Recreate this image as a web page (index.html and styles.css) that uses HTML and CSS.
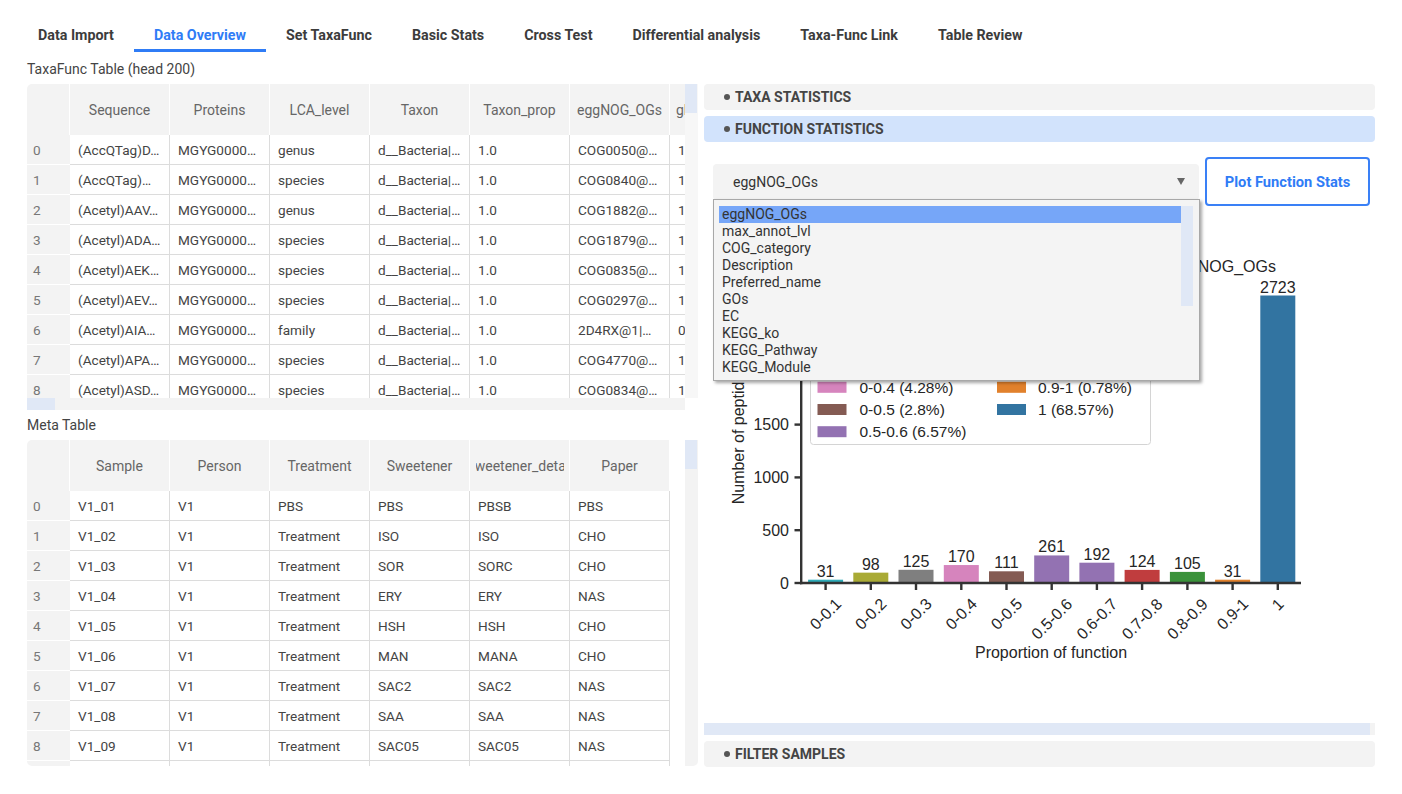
FILE: index.html
```html
<!DOCTYPE html>
<html>
<head>
<meta charset="utf-8">
<link rel="stylesheet" href="styles.css">
</head>
<body>
<div class="tabs">
  <div class="tab">Data Import</div>
  <div class="tab active">Data Overview</div>
  <div class="tab">Set TaxaFunc</div>
  <div class="tab">Basic Stats</div>
  <div class="tab">Cross Test</div>
  <div class="tab">Differential analysis</div>
  <div class="tab">Taxa-Func Link</div>
  <div class="tab">Table Review</div>
</div>
<div class="main">
  <div class="col left">
    <div class="label l1">TaxaFunc Table (head 200)</div>
    <div class="tbox t1">
      <div class="tmain">
        <div class="viewport">
          <div class="grid">
            <div class="h"></div><div class="h"><span>Sequence</span></div><div class="h"><span>Proteins</span></div><div class="h"><span>LCA_level</span></div><div class="h"><span>Taxon</span></div><div class="h"><span>Taxon_prop</span></div><div class="h"><span>eggNOG_OGs</span></div><div class="h hl"><span>glycan_level</span></div>
            <div class="i">0</div><div class="c">(AccQTag)D…</div><div class="c">MGYG0000…</div><div class="c">genus</div><div class="c">d__Bacteria|…</div><div class="c">1.0</div><div class="c">COG0050@…</div><div class="c">1</div>
            <div class="i">1</div><div class="c">(AccQTag)…</div><div class="c">MGYG0000…</div><div class="c">species</div><div class="c">d__Bacteria|…</div><div class="c">1.0</div><div class="c">COG0840@…</div><div class="c">1</div>
            <div class="i">2</div><div class="c">(Acetyl)AAV…</div><div class="c">MGYG0000…</div><div class="c">genus</div><div class="c">d__Bacteria|…</div><div class="c">1.0</div><div class="c">COG1882@…</div><div class="c">1</div>
            <div class="i">3</div><div class="c">(Acetyl)ADA…</div><div class="c">MGYG0000…</div><div class="c">species</div><div class="c">d__Bacteria|…</div><div class="c">1.0</div><div class="c">COG1879@…</div><div class="c">1</div>
            <div class="i">4</div><div class="c">(Acetyl)AEK…</div><div class="c">MGYG0000…</div><div class="c">species</div><div class="c">d__Bacteria|…</div><div class="c">1.0</div><div class="c">COG0835@…</div><div class="c">1</div>
            <div class="i">5</div><div class="c">(Acetyl)AEV…</div><div class="c">MGYG0000…</div><div class="c">species</div><div class="c">d__Bacteria|…</div><div class="c">1.0</div><div class="c">COG0297@…</div><div class="c">1</div>
            <div class="i">6</div><div class="c">(Acetyl)AIA…</div><div class="c">MGYG0000…</div><div class="c">family</div><div class="c">d__Bacteria|…</div><div class="c">1.0</div><div class="c">2D4RX@1|…</div><div class="c">0</div>
            <div class="i">7</div><div class="c">(Acetyl)APA…</div><div class="c">MGYG0000…</div><div class="c">species</div><div class="c">d__Bacteria|…</div><div class="c">1.0</div><div class="c">COG4770@…</div><div class="c">1</div>
            <div class="i">8</div><div class="c">(Acetyl)ASD…</div><div class="c">MGYG0000…</div><div class="c">species</div><div class="c">d__Bacteria|…</div><div class="c">1.0</div><div class="c">COG0834@…</div><div class="c">1</div>
          </div>
        </div>
        <div class="vscroll"><div class="vthumb"></div></div>
      </div>
      <div class="hscroll"><div class="htrack"><div class="hthumb"></div></div></div>
    </div>
    <div class="label l2">Meta Table</div>
    <div class="tbox t2">
      <div class="tmain">
        <div class="viewport">
          <div class="grid">
            <div class="h"></div><div class="h"><span>Sample</span></div><div class="h"><span>Person</span></div><div class="h"><span>Treatment</span></div><div class="h"><span>Sweetener</span></div><div class="h"><span>Sweetener_detail</span></div><div class="h"><span>Paper</span></div>
            <div class="i">0</div><div class="c">V1_01</div><div class="c">V1</div><div class="c">PBS</div><div class="c">PBS</div><div class="c">PBSB</div><div class="c">PBS</div>
            <div class="i">1</div><div class="c">V1_02</div><div class="c">V1</div><div class="c">Treatment</div><div class="c">ISO</div><div class="c">ISO</div><div class="c">CHO</div>
            <div class="i">2</div><div class="c">V1_03</div><div class="c">V1</div><div class="c">Treatment</div><div class="c">SOR</div><div class="c">SORC</div><div class="c">CHO</div>
            <div class="i">3</div><div class="c">V1_04</div><div class="c">V1</div><div class="c">Treatment</div><div class="c">ERY</div><div class="c">ERY</div><div class="c">NAS</div>
            <div class="i">4</div><div class="c">V1_05</div><div class="c">V1</div><div class="c">Treatment</div><div class="c">HSH</div><div class="c">HSH</div><div class="c">CHO</div>
            <div class="i">5</div><div class="c">V1_06</div><div class="c">V1</div><div class="c">Treatment</div><div class="c">MAN</div><div class="c">MANA</div><div class="c">CHO</div>
            <div class="i">6</div><div class="c">V1_07</div><div class="c">V1</div><div class="c">Treatment</div><div class="c">SAC2</div><div class="c">SAC2</div><div class="c">NAS</div>
            <div class="i">7</div><div class="c">V1_08</div><div class="c">V1</div><div class="c">Treatment</div><div class="c">SAA</div><div class="c">SAA</div><div class="c">NAS</div>
            <div class="i">8</div><div class="c">V1_09</div><div class="c">V1</div><div class="c">Treatment</div><div class="c">SAC05</div><div class="c">SAC05</div><div class="c">NAS</div>
            <div class="i"></div><div class="c"></div><div class="c"></div><div class="c"></div><div class="c"></div><div class="c"></div><div class="c"></div>
          </div>
        </div>
        <div class="vscroll"><div class="vthumb"></div></div>
      </div>
    </div>
  </div>
  <div class="col right">
    <div class="acc"><span class="dot"></span>TAXA STATISTICS</div>
    <div class="acc open"><span class="dot"></span>FUNCTION STATISTICS</div>
    <div class="fpanel">
      <div class="controls">
        <div class="select"><span>eggNOG_OGs</span><span class="arrow"></span></div>
        <button class="btn">Plot Function Stats</button>
      </div>
      <div class="chart">
        <svg width="666" height="517" viewBox="704 206 666 517" font-family="'Liberation Sans', Arial, sans-serif" font-size="16" fill="#262626">
          <text x="1276" y="272" text-anchor="end">Number of peptides by proportion of eggNOG_OGs</text>
          <rect x="810.5" y="300.5" width="340" height="144" rx="3" fill="#fff" stroke="#d4d4d4"/>
          <g font-size="15.5">
          <rect x="817.5" y="315.2" width="29" height="11" fill="#2eabb8"/><text x="859.5" y="326.4">0-0.1 (0.78%)</text>
          <rect x="817.5" y="337.4" width="29" height="11" fill="#a9aa35"/><text x="859.5" y="348.6">0-0.2 (2.47%)</text>
          <rect x="817.5" y="359.6" width="29" height="11" fill="#7f7f7f"/><text x="859.5" y="370.8">0-0.3 (3.15%)</text>
          <rect x="817.5" y="381.8" width="29" height="11" fill="#d684bd"/><text x="859.5" y="393">0-0.4 (4.28%)</text>
          <rect x="817.5" y="404" width="29" height="11" fill="#845b53"/><text x="859.5" y="415.2">0-0.5 (2.8%)</text>
          <rect x="817.5" y="426.2" width="29" height="11" fill="#9372b2"/><text x="859.5" y="437.4">0.5-0.6 (6.57%)</text>
          <rect x="997" y="315.2" width="29" height="11" fill="#9372b2"/><text x="1038" y="326.4">0.6-0.7 (4.84%)</text>
          <rect x="997" y="337.4" width="29" height="11" fill="#c03d3e"/><text x="1038" y="348.6">0.7-0.8 (3.12%)</text>
          <rect x="997" y="359.6" width="29" height="11" fill="#3a923a"/><text x="1038" y="370.8">0.8-0.9 (2.64%)</text>
          <rect x="997" y="381.8" width="29" height="11" fill="#e1812c"/><text x="1038" y="393">0.9-1 (0.78%)</text>
          <rect x="997" y="404" width="29" height="11" fill="#3274a1"/><text x="1038" y="415.2">1 (68.57%)</text>
          </g>

          <rect x="808.1" y="579.7" width="35" height="3.3" fill="#2eabb8"/>
          <rect x="853.3" y="572.65" width="35" height="10.35" fill="#a9aa35"/>
          <rect x="898.5" y="569.8" width="35" height="13.2" fill="#7f7f7f"/>
          <rect x="943.8" y="565.05" width="35" height="17.95" fill="#d684bd"/>
          <rect x="989" y="571.3" width="35" height="11.7" fill="#845b53"/>
          <rect x="1034.2" y="555.44" width="35" height="27.56" fill="#9372b2"/>
          <rect x="1079.4" y="562.7" width="35" height="20.3" fill="#9372b2"/>
          <rect x="1124.6" y="569.9" width="35" height="13.1" fill="#c03d3e"/>
          <rect x="1169.9" y="571.9" width="35" height="11.1" fill="#3a923a"/>
          <rect x="1215.1" y="579.7" width="35" height="3.3" fill="#e1812c"/>
          <rect x="1260.3" y="295.5" width="35" height="287.5" fill="#3274a1"/>

          <g text-anchor="middle">
            <text x="825.6" y="576.7">31</text>
            <text x="870.8" y="569.6">98</text>
            <text x="916" y="566.8">125</text>
            <text x="961.3" y="562">170</text>
            <text x="1006.5" y="568.3">111</text>
            <text x="1051.7" y="552.4">261</text>
            <text x="1096.9" y="559.7">192</text>
            <text x="1142.1" y="566.9">124</text>
            <text x="1187.4" y="568.9">105</text>
            <text x="1232.6" y="576.7">31</text>
            <text x="1277.8" y="292.5">2723</text>
          </g>

          <g stroke="#333" stroke-width="2.4">
            <line x1="801.2" y1="280" x2="801.2" y2="584.2"/>
            <line x1="800" y1="583" x2="1301" y2="583"/>
            <line x1="794.5" y1="583" x2="801" y2="583"/>
            <line x1="794.5" y1="530.2" x2="801" y2="530.2"/>
            <line x1="794.5" y1="477.4" x2="801" y2="477.4"/>
            <line x1="794.5" y1="424.6" x2="801" y2="424.6"/>
            <line x1="794.5" y1="371.8" x2="801" y2="371.8"/>
            <line x1="794.5" y1="319" x2="801" y2="319"/>
            <line x1="825.6" y1="583" x2="825.6" y2="590"/>
            <line x1="870.8" y1="583" x2="870.8" y2="590"/>
            <line x1="916" y1="583" x2="916" y2="590"/>
            <line x1="961.3" y1="583" x2="961.3" y2="590"/>
            <line x1="1006.5" y1="583" x2="1006.5" y2="590"/>
            <line x1="1051.7" y1="583" x2="1051.7" y2="590"/>
            <line x1="1096.9" y1="583" x2="1096.9" y2="590"/>
            <line x1="1142.1" y1="583" x2="1142.1" y2="590"/>
            <line x1="1187.4" y1="583" x2="1187.4" y2="590"/>
            <line x1="1232.6" y1="583" x2="1232.6" y2="590"/>
            <line x1="1277.8" y1="583" x2="1277.8" y2="590"/>
          </g>

          <g text-anchor="end">
            <text x="789" y="588.8">0</text>
            <text x="789" y="536">500</text>
            <text x="789" y="483.2">1000</text>
            <text x="789" y="430.4">1500</text>
            <text x="789" y="377.6">2000</text>
            <text x="789" y="324.8">2500</text>
          </g>

          <g text-anchor="middle" dominant-baseline="central">
            <text transform="translate(825.6,614) rotate(-45)">0-0.1</text>
            <text transform="translate(870.8,614) rotate(-45)">0-0.2</text>
            <text transform="translate(916,614) rotate(-45)">0-0.3</text>
            <text transform="translate(961.3,614) rotate(-45)">0-0.4</text>
            <text transform="translate(1006.5,614) rotate(-45)">0-0.5</text>
            <text transform="translate(1051.7,619) rotate(-45)">0.5-0.6</text>
            <text transform="translate(1096.9,619) rotate(-45)">0.6-0.7</text>
            <text transform="translate(1142.1,619) rotate(-45)">0.7-0.8</text>
            <text transform="translate(1187.4,619) rotate(-45)">0.8-0.9</text>
            <text transform="translate(1232.6,614) rotate(-45)">0.9-1</text>
            <text transform="translate(1277.8,604.5) rotate(-45)">1</text>
          </g>

          <text x="1051" y="658" text-anchor="middle">Proportion of function</text>
          <text transform="translate(744,434.5) rotate(-90)" text-anchor="middle">Number of peptides</text>
        </svg>
      </div>
      <div class="cscroll"><div class="cthumb"></div></div>
      <div class="popup">
        <div class="plist">
          <div class="pitem sel">eggNOG_OGs</div>
          <div class="pitem">max_annot_lvl</div>
          <div class="pitem">COG_category</div>
          <div class="pitem">Description</div>
          <div class="pitem">Preferred_name</div>
          <div class="pitem">GOs</div>
          <div class="pitem">EC</div>
          <div class="pitem">KEGG_ko</div>
          <div class="pitem">KEGG_Pathway</div>
          <div class="pitem">KEGG_Module</div>
        </div>
        <div class="pscroll"></div>
      </div>
    </div>
    <div class="acc filter"><span class="dot"></span>FILTER SAMPLES</div>
  </div>
</div>
</body>
</html>
```

FILE: styles.css
```css
* { box-sizing: border-box; }
body {
  margin: 0;
  width: 1402px;
  height: 794px;
  overflow: hidden;
  background: #fff;
  color: #444;
  font-family: Roboto, "Noto Sans", sans-serif;
}
.tabs {
  display: flex;
  height: 52px;
  padding: 21px 0 0 18px;
}
.tab {
  padding: 0 20px;
  height: 31px;
  line-height: 28px;
  font-size: 14.28px;
  font-weight: 700;
  color: #3c3c3c;
  border-bottom: 3px solid transparent;
  white-space: nowrap;
}
.tab.active {
  color: #2f7cf6;
  border-bottom-color: #2f7cf6;
}
.main {
  display: flex;
  gap: 6px;
  padding: 0 27px;
}
.col {
  width: 671px;
  display: flex;
  flex-direction: column;
}
.label { font-size: 14px; color: #444; }
.label.l1 { height: 32px; padding-top: 2px; line-height: 30px; }
.label.l2 { height: 30px; line-height: 30px; }

.tbox { height: 326px; display: flex; flex-direction: column; }
.tmain { display: flex; flex: 1; min-height: 0; }
.viewport {
  width: 658px;
  overflow: hidden;
  border-radius: 5px 0 0 0;
  background: #fff;
}
.t2 .viewport { border-radius: 5px 0 0 5px; }
.vscroll { width: 13px; background: #f7f7f7; }
.t2 .vscroll { background: #f3f3f3; border-radius: 0 0 5px 0; }
.vthumb { width: 12px; height: 29px; background: #e0e8f6; }
.hscroll { height: 12px; display: flex; }
.htrack { width: 658px; background: #f3f3f3; }
.hthumb { width: 28px; height: 12px; background: #e0e8f6; }

.grid {
  display: grid;
  grid-template-columns: 43px repeat(7, 100px);
  width: 743px;
  font-size: 13.6px;
}
.t2 .grid {
  grid-template-columns: 43px repeat(6, 100px);
  width: 643px;
}
.h {
  height: 51px;
  background: #f3f3f3;
  border-right: 1px solid #fff;
  display: flex;
  align-items: center;
  justify-content: center;
  color: #666;
  font-size: 14px;
}
.h > span {
  width: 88px;
  display: flex;
  justify-content: center;
  overflow: hidden;
  white-space: nowrap;
}
.h.hl { justify-content: flex-start; padding-left: 6px; }
.h.hl > span { justify-content: flex-start; }
.i {
  height: 30px;
  line-height: 31px;
  background: #f3f3f3;
  border-bottom: 1px solid #fff;
  color: #777;
  padding-left: 6px;
  overflow: hidden;
}
.c {
  height: 30px;
  line-height: 31px;
  padding: 0 2px 0 8px;
  border-right: 1px solid #dcdcdc;
  border-bottom: 1px solid #dcdcdc;
  color: #444;
  white-space: nowrap;
  overflow: hidden;
}

.right { padding-top: 32px; }
.acc {
  height: 26px;
  border-radius: 4px;
  background: #f3f3f3;
  display: flex;
  align-items: center;
  padding-left: 20px;
  font-size: 14px;
  font-weight: 700;
  color: #444;
}
.acc .dot {
  width: 6px;
  height: 6px;
  border-radius: 50%;
  background: #555;
  margin-right: 5px;
}
.acc.open { background: #d2e3fc; margin-top: 6px; }
.acc.filter { margin-top: 6px; }
.fpanel { position: relative; padding-top: 15px; }
.controls {
  display: flex;
  align-items: center;
  gap: 6px;
  height: 49px;
  padding-left: 9px;
}
.select {
  width: 486px;
  height: 36px;
  background: #f3f3f3;
  border-radius: 4px;
  display: flex;
  align-items: center;
  padding: 0 14px 0 20px;
  font-size: 14px;
  color: #333;
}
.arrow {
  margin-left: auto;
  width: 0;
  height: 0;
  border-left: 4.5px solid transparent;
  border-right: 4.5px solid transparent;
  border-top: 7px solid #666;
}
.btn {
  width: 165px;
  height: 49px;
  border: 2px solid #3a80f6;
  border-radius: 4px;
  background: #fff;
  color: #2f7cf6;
  font-family: Roboto, sans-serif;
  font-size: 14.67px;
  font-weight: 700;
  padding: 0;
}
.chart { height: 517px; background: #fff; }
.chart svg { display: block; }
.cscroll { height: 12px; display: flex; background: #f3f3f3; }
.cthumb { width: 666px; background: #e0e8f6; }
.popup {
  position: absolute;
  left: 9px;
  top: 57px;
  width: 487px;
  height: 182px;
  border: 1px solid #a8a8a8;
  background: #f4f4f4;
  box-shadow: 2px 2px 3px rgba(0, 0, 0, 0.35);
  padding: 6px 0 0 5px;
  display: flex;
}
.plist { width: 462px; }
.pitem {
  height: 17px;
  line-height: 17px;
  padding-left: 3px;
  font-size: 14px;
  color: #333;
  white-space: nowrap;
}
.pitem.sel { background: #76a6f8; }
.pscroll { width: 12px; height: 100px; background: #e0e8f6; }
```
